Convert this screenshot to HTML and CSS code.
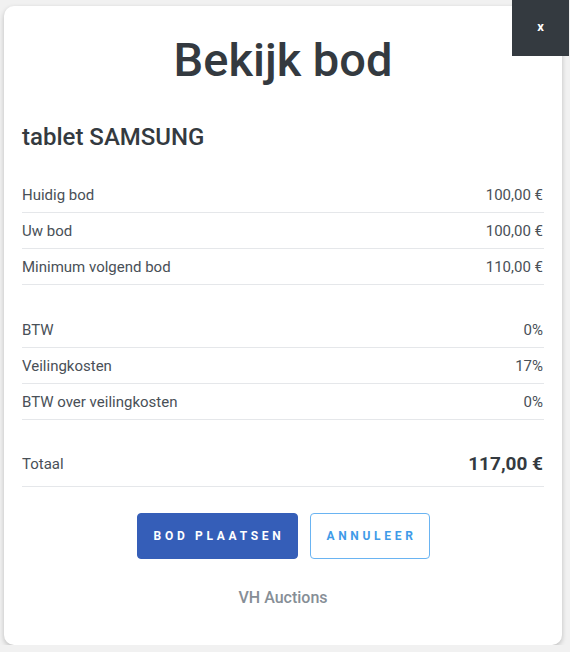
FILE: index.html
```html
<!DOCTYPE html>
<html lang="nl">
<head>
    <meta charset="UTF-8">
    <meta name="viewport" content="width=device-width, initial-scale=1.0">
    <title>Bekijk bod</title>
    <link rel="stylesheet" href="styles.css">
</head>
<body>
    <button class="close">x</button>

    <div class="modal">
        <h1 class="title">Bekijk bod</h1>
        <h2 class="lot">tablet SAMSUNG</h2>

        <div class="group">
            <div class="row"><span>Huidig bod</span><span>100,00 €</span></div>
            <div class="row"><span>Uw bod</span><span>100,00 €</span></div>
            <div class="row"><span>Minimum volgend bod</span><span>110,00 €</span></div>
        </div>

        <div class="group">
            <div class="row"><span>BTW</span><span>0%</span></div>
            <div class="row"><span>Veilingkosten</span><span>17%</span></div>
            <div class="row"><span>BTW over veilingkosten</span><span>0%</span></div>
        </div>

        <div class="row total"><span>Totaal</span><strong>117,00 €</strong></div>

        <div class="actions">
            <button class="btn btn-primary">Bod plaatsen</button>
            <button class="btn btn-outline">Annuleer</button>
        </div>

        <p class="brand">VH Auctions</p>
    </div>
</body>
</html>
```

FILE: styles.css
```css
body {
    margin: 0;
    background-color: #f1f1f1;
    font-family: Roboto, "Noto Sans", sans-serif;
    color: #495057;
}

.close {
    position: absolute;
    top: 0;
    right: 1px;
    width: 57px;
    height: 56px;
    background-color: #343a40;
    color: #fff;
    border: none;
    font-family: Roboto, sans-serif;
    font-weight: bold;
    font-size: 13px;
    padding: 0 0 4px 0;
}

.modal {
    margin: 6px 0 0 4px;
    width: 558px;
    height: 639px;
    box-sizing: border-box;
    padding: 0 18px;
    background-color: #fff;
    border-radius: 10px;
    box-shadow: 0 2px 5px rgba(0, 0, 0, 0.22);
}

.title {
    margin: 0;
    padding-top: 26px;
    text-align: center;
    font-size: 47px;
    line-height: 56px;
    font-weight: 500;
    color: #343a40;
}

.lot {
    margin: 34px 0 25px;
    font-size: 24px;
    line-height: 30px;
    font-weight: 500;
    color: #343a40;
}

.group + .group {
    margin-top: 27px;
}

.row {
    display: flex;
    justify-content: space-between;
    padding: 8px 1px 7px 0;
    font-size: 15px;
    line-height: 20px;
    border-bottom: 1px solid #e5e7ea;
}

.row.total {
    margin-top: 22px;
    padding: 11px 1px 11px 0;
    line-height: 22px;
}

.row.total strong {
    font-size: 19px;
    font-weight: 700;
    color: #343a40;
}

.actions {
    display: flex;
    justify-content: center;
    gap: 12px;
    margin-top: 26px;
}

.btn {
    height: 46px;
    box-sizing: border-box;
    border-radius: 4px;
    font-family: Roboto, sans-serif;
    font-size: 12px;
    font-weight: bold;
    letter-spacing: 3.7px;
    text-transform: uppercase;
    cursor: pointer;
    padding: 0 0 0 4px;
}

.btn-primary {
    width: 161px;
    background-color: #355eb8;
    border: 1px solid #355eb8;
    color: #fff;
}

.btn-outline {
    width: 120px;
    background-color: #fff;
    border: 1px solid #6ab4f2;
    color: #3f9be8;
}

.brand {
    margin: 29px 0 0;
    text-align: center;
    font-size: 16px;
    font-weight: 500;
    color: #868e96;
}
```
